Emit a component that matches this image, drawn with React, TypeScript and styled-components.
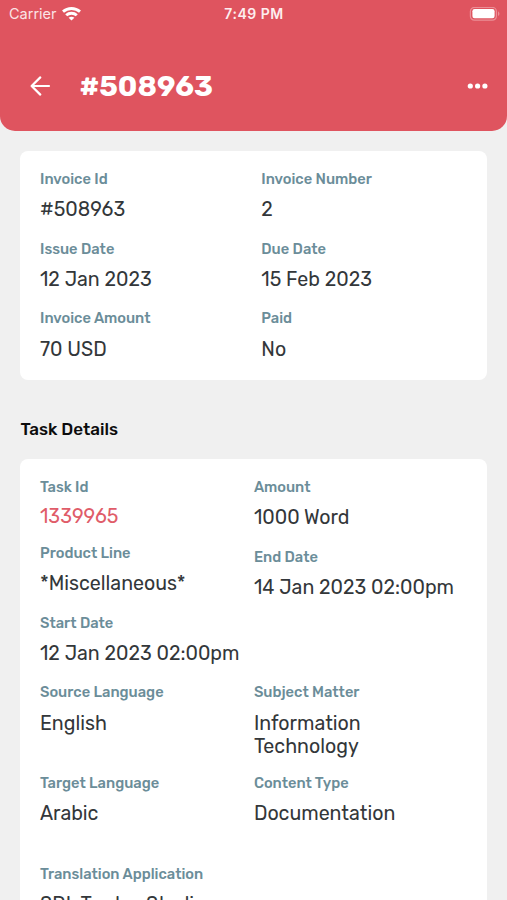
import React from "react";
import styled, { createGlobalStyle } from "styled-components";

const GlobalStyle = createGlobalStyle`
  * { box-sizing: border-box; }
  html, body { margin: 0; height: 100%; overflow: hidden; }
  body { background: #f0f0f0; font-family: Rubik, Roboto, sans-serif; }
`;

const Screen = styled.main`
  display: flex;
  flex-direction: column;
  width: 100%;
  height: 900px;
  overflow: hidden;
  background: #f0f0f0;
`;

const Header = styled.header`
  flex: none;
  height: 131.4px;
  border-radius: 0 0 15px 15px;
  background: #df545f;
  color: #fff;
`;

const StatusBar = styled.div`
  display: grid;
  grid-template-columns: 1fr auto 1fr;
  align-items: center;
  height: 27px;
  padding: 0 7px 0 9px;
  font: 400 14.5px/27px Inter, sans-serif;
`;

const Carrier = styled.div`
  display: flex;
  align-items: center;
  gap: 5px;
  color: #fbe3e5;
`;

const Clock = styled.time`
  margin-right: 1px;
  font-size: 14px;
  font-weight: 600;
  letter-spacing: 0.5px;
  color: #fdeeef;
`;

const Battery = styled.svg`
  display: block;
  justify-self: end;
`;

const TitleBar = styled.div`
  display: flex;
  align-items: center;
  height: 60px;
  margin-top: 29px;
  padding: 0 18px 0 29px;
`;

const IconButton = styled.button`
  display: flex;
  padding: 0;
  border: 0;
  background: none;
  color: inherit;
`;

const Title = styled.h1`
  flex: 1;
  margin: 0 0 0 28.5px;
  font-size: 28.8px;
  font-weight: 700;
  line-height: 60px;
`;

const Card = styled.section`
  flex: none;
  margin: 20px 19.6px 0 20.4px;
  padding: 19.8px 19.6px 0;
  border-radius: 8px;
  background: #fff;
`;

const InvoiceCard = styled(Card)`
  display: grid;
  grid-template-columns: 221.3px 1fr;
  grid-auto-rows: 69.6px;
  height: 228.2px;
`;

const SectionTitle = styled.h2`
  flex: none;
  height: 20px;
  margin: 39.4px 0 0 20.6px;
  font-size: 17px;
  font-weight: 500;
  line-height: 20px;
  color: #0c0c0d;
`;

const TaskCard = styled(Card)`
  height: 520px;
  margin-top: 20.2px;
`;

const Columns = styled.div`
  display: grid;
  grid-template-columns: 213.9px 1fr;
`;

const Column = styled.div`
  display: flex;
  flex-direction: column;
`;

const LanguageRows = styled(Columns)`
  grid-auto-rows: 90.8px;
`;

const FieldBox = styled.div<{ $compact?: boolean }>`
  height: ${(p) => (p.$compact ? 66 : 69.7)}px;
`;

const Label = styled.div`
  height: 17px;
  font-size: 14.7px;
  font-weight: 500;
  line-height: 17px;
  white-space: nowrap;
  color: #6b8d99;
`;

const Value = styled.div<{ $link?: boolean }>`
  margin-top: ${(p) => (p.$link ? 8.9 : 10.2)}px;
  font-size: 19.6px;
  line-height: 23.4px;
  white-space: pre;
  color: ${(p) => (p.$link ? "#e05c69" : "#33373a")};
`;

type FieldData = {
  label: string;
  value: string;
  link?: boolean;
};

const Field = ({ label, value, link }: FieldData) => (
  <FieldBox $compact={link}>
    <Label>{label}</Label>
    <Value $link={link}>{value}</Value>
  </FieldBox>
);

const invoice: FieldData[] = [
  { label: "Invoice Id", value: "#508963" },
  { label: "Invoice Number", value: "2" },
  { label: "Issue Date", value: "12 Jan 2023" },
  { label: "Due Date", value: "15 Feb 2023" },
  { label: "Invoice Amount", value: "70 USD" },
  { label: "Paid", value: "No" },
];

const taskLeft: FieldData[] = [
  { label: "Task Id", value: "1339965", link: true },
  { label: "Product Line", value: "*Miscellaneous*" },
  { label: "Start Date", value: "12 Jan 2023 02:00pm" },
];

const taskRight: FieldData[] = [
  { label: "Amount", value: "1000 Word" },
  { label: "End Date", value: "14 Jan 2023 02:00pm" },
];

const languages: FieldData[] = [
  { label: "Source Language", value: "English" },
  { label: "Subject Matter", value: "Information\nTechnology" },
  { label: "Target Language", value: "Arabic" },
  { label: "Content Type", value: "Documentation" },
  { label: "Translation Application", value: "SDL Trados Studio" },
];

const renderFields = (fields: FieldData[]) => fields.map((f) => <Field key={f.label} {...f} />);

export default function App() {
  return (
    <>
      <GlobalStyle />
      <Screen>
        <Header>
          <StatusBar>
            <Carrier>
              Carrier
              <svg width="19" height="14" viewBox="0 0 19 14" fill="none" stroke="#fff" strokeWidth="2.9">
                <path d="M1 4.7C5.8.4 13.2.4 18 4.7" />
                <path d="M4.2 8.3c3-2.8 7.6-2.8 10.6 0" />
                <path d="M9.5 13.6 6.6 10.8c1.7-1.5 4.1-1.5 5.8 0z" fill="#fff" stroke="none" />
              </svg>
            </Carrier>
            <Clock>7:49 PM</Clock>
            <Battery width="31" height="14" viewBox="0 0 31 14">
              <rect x="1.4" y="0.4" width="26" height="12.8" rx="4" fill="none" stroke="#eb8e96" strokeWidth="1.2" />
              <rect x="3.4" y="2.1" width="22.2" height="9.2" rx="2.2" fill="#fff" />
              <path d="M29 4.5c1.9.7 1.9 3.7 0 4.4z" fill="#eb8e96" />
            </Battery>
          </StatusBar>
          <TitleBar>
            <IconButton aria-label="Back">
              <svg width="22" height="22" viewBox="0 0 22 22" fill="none" stroke="#fff" strokeWidth="2.2" strokeLinecap="round" strokeLinejoin="round">
                <path d="M20 11H2.6M11.3 2.4 2.6 11l8.7 8.6" />
              </svg>
            </IconButton>
            <Title>#508963</Title>
            <IconButton aria-label="More options">
              <svg width="22" height="8" viewBox="0 0 22 8" fill="#fff">
                <circle cx="3.3" cy="4" r="2.6" />
                <circle cx="10.6" cy="4" r="2.6" />
                <circle cx="17.9" cy="4" r="2.6" />
              </svg>
            </IconButton>
          </TitleBar>
        </Header>
        <InvoiceCard>{renderFields(invoice)}</InvoiceCard>
        <SectionTitle>Task Details</SectionTitle>
        <TaskCard>
          <Columns>
            <Column>{renderFields(taskLeft)}</Column>
            <Column>{renderFields(taskRight)}</Column>
          </Columns>
          <LanguageRows>{renderFields(languages)}</LanguageRows>
        </TaskCard>
      </Screen>
    </>
  );
}
